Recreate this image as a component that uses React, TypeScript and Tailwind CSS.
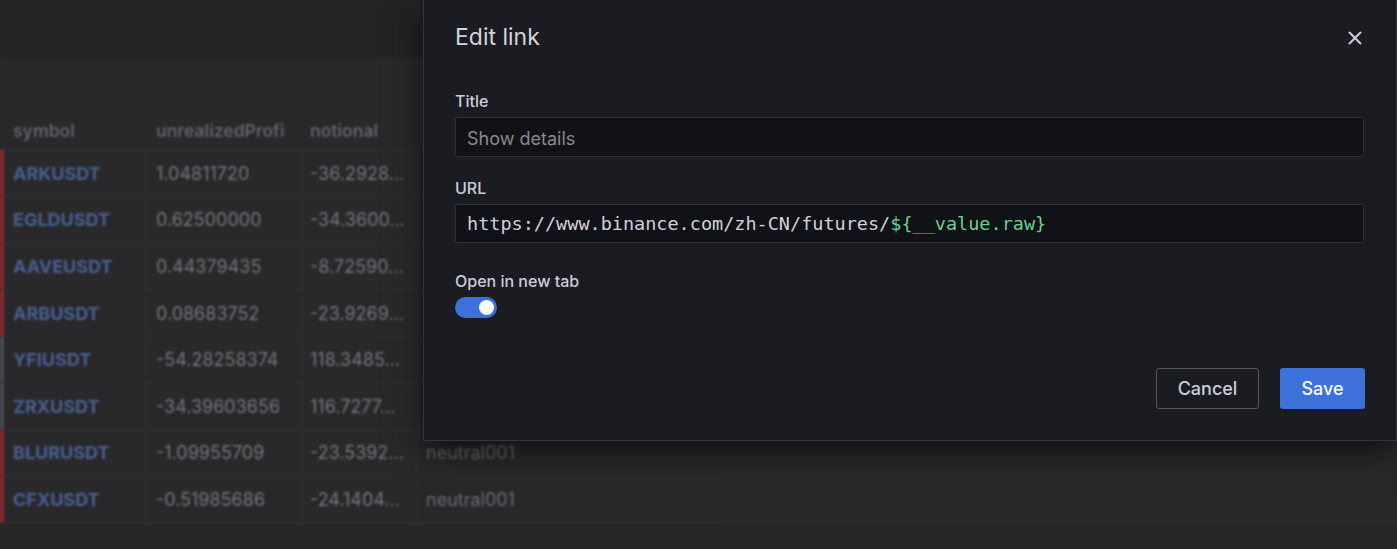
import React from "react";
import { X } from "lucide-react";

const rows = [
  { symbol: "ARKUSDT", profit: "1.04811720", notional: "-36.2928...", side: "red" },
  { symbol: "EGLDUSDT", profit: "0.62500000", notional: "-34.3600...", side: "red" },
  { symbol: "AAVEUSDT", profit: "0.44379435", notional: "-8.72590...", side: "red" },
  { symbol: "ARBUSDT", profit: "0.08683752", notional: "-23.9269...", side: "red" },
  { symbol: "YFIUSDT", profit: "-54.28258374", notional: "118.3485...", side: "gray" },
  { symbol: "ZRXUSDT", profit: "-34.39603656", notional: "116.7277...", side: "gray" },
  { symbol: "BLURUSDT", profit: "-1.09955709", notional: "-23.5392...", side: "red" },
  { symbol: "CFXUSDT", profit: "-0.51985686", notional: "-24.1404...", side: "red" },
];

function BackgroundTable() {
  return (
    <div className="flex flex-col h-full blur-[0.9px]">
      <div className="h-[60px] bg-[#232326] border-b border-[#2e2e31]" />
      <div className="flex-1 bg-[#29292c] flex flex-col">
        <div className="h-[53px]" />
        <div className="w-[725px] flex h-[37px] items-center text-[17.5px] font-semibold text-[#636368]">
          <div className="w-[147px] pl-[13px]">symbol</div>
          <div className="w-[155px] pl-[9px]">unrealizedProfi</div>
          <div className="w-[115px] pl-[8px]">notional</div>
          <div className="flex-1" />
        </div>
        {rows.map((r) => (
          <div
            key={r.symbol}
            className="w-[725px] flex h-[46.6px] border-t border-[#313134] text-[18px]"
          >
            <div
              className={
                r.side === "red"
                  ? "w-[4px] bg-[#8f2a31]"
                  : "w-[4px] bg-[#4b4c50]"
              }
            />
            <div className="w-[143px] flex items-center pl-[9px] font-bold text-[#4a5f91] border-r border-[#313134]">
              {r.symbol}
            </div>
            <div className="w-[155px] flex items-center pl-[9px] text-[#76767b] border-r border-[#313134]">
              {r.profit}
            </div>
            <div className="w-[115px] flex items-center pl-[8px] text-[#76767b] border-r border-[#313134] whitespace-nowrap overflow-hidden">
              {r.notional}
            </div>
            <div className="flex-1 flex items-center pl-[9px] text-[#6a6a6f]">
              {r.symbol === "BLURUSDT" || r.symbol === "CFXUSDT" ? "neutral001" : ""}
            </div>
          </div>
        ))}
        <div className="w-[725px] border-t border-[#313134]" />
        <div className="flex-1" />
      </div>
      <div className="h-[26px] bg-[#262628] border-t border-[#303033]" />
    </div>
  );
}

function EditLinkModal() {
  return (
    <div className="absolute left-[423px] top-[-1px] w-[974px] h-[442px] bg-[#1b1c21] border border-[#34353a] shadow-[0_10px_30px_rgba(0,0,0,0.6)] flex flex-col px-[31px] font-['Inter',sans-serif]">
      <div className="flex items-center justify-between pt-[21px] h-[53px]">
        <div className="text-[23px] leading-[32px] text-[#d3d4dc]">Edit link</div>
        <X className="-mr-[1px] mt-[1px] text-[#ccccdc]" size={22} strokeWidth={2.2} />
      </div>
      <div className="mt-[38px] text-[16px] leading-[20px] font-medium text-[#ccccdc]">Title</div>
      <div className="mt-[6px] h-[40px] w-[909px] bg-[#111217] border border-[#303136] rounded-[2px] flex items-center px-[11px] pt-[3px] text-[18px] text-[#88898f]">
        Show details
      </div>
      <div className="mt-[21px] text-[16px] leading-[20px] font-medium text-[#ccccdc]">URL</div>
      <div className="mt-[6px] h-[39px] w-[909px] bg-[#111217] border border-[#303136] rounded-[2px] flex items-center px-[11px] text-[18.5px] font-['DejaVu_Sans_Mono',monospace]">
        <span className="text-[#d0d1d9]">https://www.binance.com/zh-CN/futures/</span>
        <span className="text-[#6ccf8e]">{"${__value.raw}"}</span>
      </div>
      <div className="mt-[28px] text-[16px] leading-[20px] font-medium text-[#ccccdc]">Open in new tab</div>
      <div className="mt-[6px] w-[42px] h-[21px] rounded-full bg-[#3d71d9] flex items-center justify-end pr-[3px]">
        <div className="w-[15px] h-[15px] rounded-full bg-white" />
      </div>
      <div className="mt-[50px] flex justify-end gap-[21px]">
        <button className="h-[41px] w-[103px] rounded-[3px] border border-[#55565c] text-[18px] font-medium text-[#ccccdc]">
          Cancel
        </button>
        <button className="h-[41px] w-[85px] rounded-[3px] bg-[#3d71d9] text-[18px] font-medium text-white">
          Save
        </button>
      </div>
    </div>
  );
}

export default function App() {
  return (
    <div className="relative w-[1397px] h-[549px] overflow-hidden bg-[#29292c] font-['Inter',sans-serif]">
      <BackgroundTable />
      <EditLinkModal />
    </div>
  );
}
